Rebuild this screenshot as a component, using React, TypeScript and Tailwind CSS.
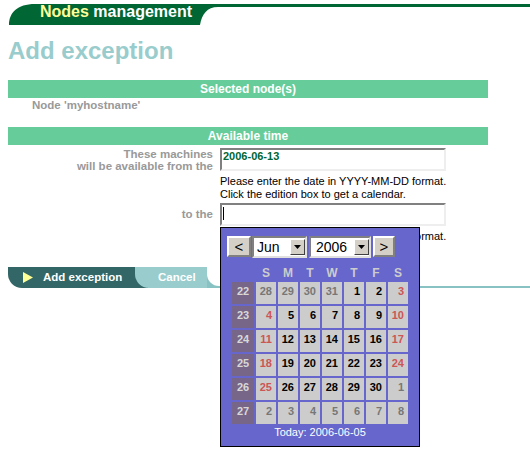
const font = { fontFamily: '"Liberation Sans", Arial, sans-serif' };

type Day = { n: number; other?: boolean };

const weeks: { wk: number; days: Day[] }[] = [
  { wk: 22, days: [{ n: 28, other: true }, { n: 29, other: true }, { n: 30, other: true }, { n: 31, other: true }, { n: 1 }, { n: 2 }, { n: 3 }] },
  { wk: 23, days: [4, 5, 6, 7, 8, 9, 10].map((n) => ({ n })) },
  { wk: 24, days: [11, 12, 13, 14, 15, 16, 17].map((n) => ({ n })) },
  { wk: 25, days: [18, 19, 20, 21, 22, 23, 24].map((n) => ({ n })) },
  { wk: 26, days: [{ n: 25 }, { n: 26 }, { n: 27 }, { n: 28 }, { n: 29 }, { n: 30 }, { n: 1, other: true }] },
  { wk: 27, days: [2, 3, 4, 5, 6, 7, 8].map((n) => ({ n, other: true })) },
];

function DropArrow() {
  return (
    <div className="flex h-[16px] w-[15px] items-center justify-center border border-t-white border-l-white border-b-[#404040] border-r-[#404040] bg-[#d4d0c8]">
      <svg width="7" height="4" viewBox="0 0 7 4">
        <path d="M0 0 L7 0 L3.5 4 Z" fill="#000" />
      </svg>
    </div>
  );
}

function NavButton({ label, w }: { label: string; w: string }) {
  return (
    <div
      className={`flex h-[21px] ${w} items-center justify-center border-2 border-t-white border-l-white border-b-[#808080] border-r-[#808080] bg-[#d4d0c8] text-[15px] leading-none text-black`}
    >
      {label}
    </div>
  );
}

function Calendar() {
  return (
    <div className="absolute left-[220px] top-[227px] h-[220px] w-[200px] border border-black bg-[#6666cc] pl-[6px] pt-[8px]">
      {/* month / year selector */}
      <div className="flex items-start">
        <NavButton label="<" w="w-[24px]" />
        <div className="ml-[1px] flex h-[22px] w-[55px] items-center justify-between border-2 border-t-[#808080] border-l-[#808080] border-b-[#e0e0e0] border-r-[#e0e0e0] bg-white pl-[3px] text-[14px] text-black">
          <span>Jun</span>
          <DropArrow />
        </div>
        <div className="ml-[2px] flex h-[22px] w-[62px] items-center justify-between border-2 border-t-[#808080] border-l-[#808080] border-b-[#e0e0e0] border-r-[#e0e0e0] bg-white pl-[5px] text-[14px] text-black">
          <span>2006</span>
          <DropArrow />
        </div>
        <div className="ml-[2px]">
          <NavButton label=">" w="w-[22px]" />
        </div>
      </div>

      <div className="ml-[5px]">
        <div className="mt-[8px] grid grid-cols-[22px_repeat(7,20px)] gap-x-[2px] text-[12px] font-bold leading-[14px] text-[#cccccc]">
          <span />
          {["S", "M", "T", "W", "T", "F", "S"].map((d, i) => (
            <span key={i} className="text-center">
              {d}
            </span>
          ))}
        </div>

        <div className="mt-[2px] grid grid-cols-[22px_repeat(7,20px)] gap-[2px] text-[11px] font-bold">
          {weeks.map((w) => (
            <div key={w.wk} className="contents">
              <div className="h-[22px] bg-[#776688] text-center leading-[19px] text-[#d8d8d8]">{w.wk}</div>
              {w.days.map((d, i) => (
                <div
                  key={i}
                  className={`h-[22px] bg-[#cccccc] pr-[4px] text-right leading-[19px] ${
                    d.other ? "text-[#777777]" : i === 0 || i === 6 ? "text-[#cc5555]" : "text-black"
                  }`}
                >
                  {d.n}
                </div>
              ))}
            </div>
          ))}
        </div>
      </div>

      <div className="mt-[2px] pr-[6px] text-center text-[11px] leading-[13px] text-white">Today: 2006-06-05</div>
    </div>
  );
}

export default function App() {
  return (
    <div className="relative h-[470px] w-[530px] overflow-hidden bg-white" style={font}>
      {/* HEADER TAB */}
      <div className="relative h-[26px]">
        <svg className="absolute left-0 top-0" width="530" height="26" viewBox="0 0 530 26">
          <path d="M9 25 C9 13 17 4 35 4 L530 4 L530 7 L218 7 C207 7 202 14 200 25 Z" fill="#006633" />
        </svg>
        <div className="relative pl-[40px] pt-[2px] text-[16px] font-bold leading-[20px]">
          <span className="text-[#ffff99]">Nodes</span>
          <span className="text-white"> management</span>
        </div>
      </div>

      <h1 className="ml-[8px] mt-[11px] h-[28px] text-[24px] font-bold leading-[28px] text-[#99cccc]">Add exception</h1>

      {/* SELECTED NODES */}
      <div className="ml-[8px] mt-[15px] h-[18px] w-[480px] bg-[#66cc99] text-center text-[12px] font-bold leading-[18px] text-white">
        Selected node(s)
      </div>
      <div className="pl-[32px] text-[11.5px] font-bold leading-[14px] text-[#999999]">Node 'myhostname'</div>

      {/* AVAILABLE TIME */}
      <div className="ml-[8px] mt-[15px] h-[18px] w-[480px] bg-[#66cc99] text-center text-[12px] font-bold leading-[18px] text-white">
        Available time
      </div>

      <div className="mt-[3px] grid grid-cols-[213px_1fr] gap-x-[7px] gap-y-[2px]">
        <div className="text-right text-[11.5px] font-bold leading-[12px] text-[#999999]">
          These machines
          <br />
          will be available from the
        </div>
        <div>
          <div className="h-[23px] w-[226px] border-2 border-t-[#808080] border-l-[#808080] border-b-[#eeeeee] border-r-[#eeeeee] pl-[1px] text-[11px] font-bold leading-[13px] text-[#006633]">
            2006-06-13
          </div>
          <div className="mt-[4px] text-[11px] leading-[13px] text-black">
            Please enter the date in YYYY-MM-DD format.
            <br />
            Click the edition box to get a calendar.
          </div>
        </div>

        <div className="pt-[4px] text-right text-[11.5px] font-bold leading-[14px] text-[#999999]">to the</div>
        <div>
          <div className="flex h-[23px] w-[226px] items-start border-2 border-t-[#808080] border-l-[#808080] border-b-[#eeeeee] border-r-[#eeeeee] pl-[1px] pt-[2px]">
            <span className="h-[13px] w-[1px] bg-black" />
          </div>
          <div className="mt-[4px] text-[11px] leading-[13px] text-black">
            Please enter the date in YYYY-MM-DD format.
            <br />
            Click the edition box to get a calendar.
          </div>
        </div>
      </div>

      {/* BUTTONS */}
      <div className="mt-[11px] flex h-[21px] pl-[8px] text-[11.5px] font-bold text-white">
        <div className="flex h-full w-[140px] shrink-0 items-center rounded-bl-[14px] bg-[#336666] pl-[15px]">
          <svg width="10" height="11" viewBox="0 0 10 11">
            <path d="M0 0 L10 5.5 L0 11 Z" fill="#ffff99" />
          </svg>
          <span className="ml-[10px]">Add exception</span>
        </div>
        <div className="relative -ml-[13px] flex h-full w-[72px] shrink-0 items-center rounded-bl-[14px] bg-[#99cccc] pl-[23px]">
          Cancel
        </div>
        <div className="h-full flex-1 bg-[#88c2c2]">
          <div className="h-[19px] rounded-bl-[12px] bg-white" />
        </div>
      </div>

      <Calendar />
    </div>
  );
}
